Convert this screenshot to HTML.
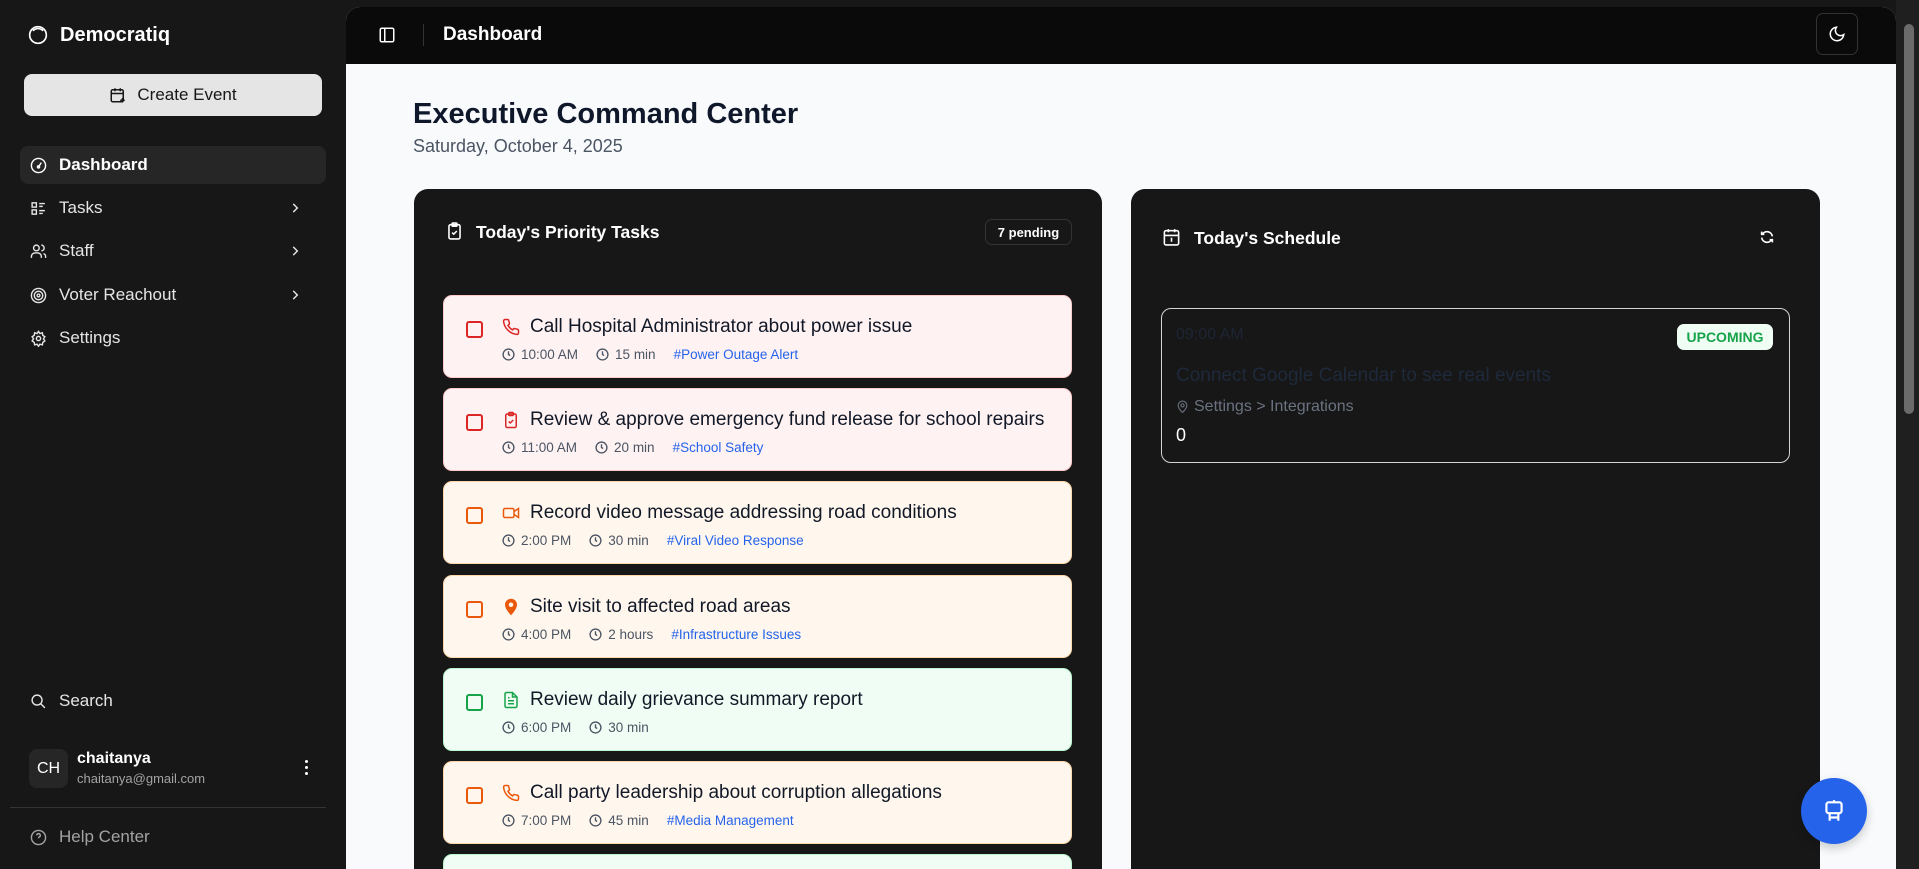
<!DOCTYPE html>
<html><head><meta charset="utf-8"><style>
*{box-sizing:border-box;margin:0;padding:0}
html,body{width:1919px;height:869px;overflow:hidden}
body{background:#171717;font-family:"Liberation Sans",sans-serif;color:#fff}
#wrap{position:relative;width:1919px;height:869px;overflow:hidden}
.abs{position:absolute}
svg{display:block}
.nav{position:absolute;left:20px;width:306px;height:38px;display:flex;align-items:center;padding-left:10px;font-size:17px;color:#e5e5e5}
.nav svg{margin-right:12px}
.nav .chev{position:absolute;right:12px}
.task{position:absolute;left:443px;width:629px;height:83px;border-radius:9px;border:1px solid}
.red{background:#fef2f2;border-color:#fecaca}
.org{background:#fff7ed;border-color:#fed7aa}
.grn{background:#f0fdf4;border-color:#bbf7d0}
.cb{position:absolute;left:22px;top:25px;width:17px;height:17px;border:2px solid;border-radius:3px}
.red .cb{border-color:#dc2626}.org .cb{border-color:#ea580c}.grn .cb{border-color:#16a34a}
.ti{position:absolute;left:58px;top:22px}
.tt{position:absolute;left:86px;top:20px;font-size:19px;color:#111827;white-space:nowrap}
.meta{position:absolute;left:58px;top:51px;font-size:13.5px;color:#4b5563;display:flex;align-items:center;white-space:nowrap}
.meta svg{margin-right:6px}
.meta span{margin-right:18px;display:flex;align-items:center}
.meta .tag{color:#2563eb}
</style></head><body><div id="wrap">
<div class="abs" style="left:28px;top:25px"><svg width="20" height="20" viewBox="0 0 24 24" fill="none" stroke="#fff" stroke-width="2"><circle cx="12" cy="12" r="10"/><path d="M6 7a8 8 0 0 1 12 0"/></svg></div>
<div class="abs" style="left:60px;top:24px;font-size:20px;font-weight:bold">Democratiq</div>
<div class="abs" style="left:24px;top:74px;width:298px;height:42px;background:#e5e5e5;border-radius:8px;display:flex;align-items:center;justify-content:center;color:#171717;font-size:17px"><svg width="18" height="18" viewBox="0 0 24 24" fill="none" stroke="#171717" stroke-width="2" style="margin-right:10px"><rect x="3" y="5" width="16" height="16" rx="2"/><path d="M8 3v4M15 3v4M3 10h16M18 16v6M15 19h6"/></svg>Create Event</div>
<div class="nav" style="top:146px;background:#262626;border-radius:8px;font-weight:bold;color:#fff"><svg width="17" height="17" viewBox="0 0 24 24" fill="none" stroke="#fff" stroke-width="2"><circle cx="12" cy="12" r="10"/><path d="M12 14l4-6"/><circle cx="12" cy="14" r="1.5"/></svg>Dashboard</div>
<div class="nav" style="top:189px"><svg width="17" height="17" viewBox="0 0 24 24" fill="none" stroke="#e5e5e5" stroke-width="2"><rect x="3" y="4" width="6" height="6"/><rect x="3" y="14" width="6" height="6"/><path d="M13 5h8M13 9h5M13 15h8M13 19h5"/></svg>Tasks<svg class="chev" width="14" height="14" viewBox="0 0 24 24" fill="none" stroke="#e5e5e5" stroke-width="2.5"><path d="M9 5l7 7-7 7"/></svg></div>
<div class="nav" style="top:232px"><svg width="17" height="17" viewBox="0 0 24 24" fill="none" stroke="#e5e5e5" stroke-width="2"><circle cx="9" cy="7" r="4"/><path d="M2 21v-2a5 5 0 0 1 5-5h4a5 5 0 0 1 5 5v2M16 3a4 4 0 0 1 0 8M22 21v-2a4 4 0 0 0-3-4"/></svg>Staff<svg class="chev" width="14" height="14" viewBox="0 0 24 24" fill="none" stroke="#e5e5e5" stroke-width="2.5"><path d="M9 5l7 7-7 7"/></svg></div>
<div class="nav" style="top:276px"><svg width="17" height="17" viewBox="0 0 24 24" fill="none" stroke="#e5e5e5" stroke-width="2"><circle cx="12" cy="12" r="10"/><circle cx="12" cy="12" r="6"/><circle cx="12" cy="12" r="2"/></svg>Voter Reachout<svg class="chev" width="14" height="14" viewBox="0 0 24 24" fill="none" stroke="#e5e5e5" stroke-width="2.5"><path d="M9 5l7 7-7 7"/></svg></div>
<div class="nav" style="top:319px"><svg width="17" height="17" viewBox="0 0 24 24" fill="none" stroke="#e5e5e5" stroke-width="2"><circle cx="12" cy="12" r="3"/><path d="M12 2l2 3 3.5-1 .5 3.5 3 2-2 3 2 3-3 2-.5 3.5-3.5-1-2 3-2-3-3.5 1-.5-3.5-3-2 2-3-2-3 3-2 .5-3.5 3.5 1z"/></svg>Settings</div>
<div class="nav" style="top:682px"><svg width="17" height="17" viewBox="0 0 24 24" fill="none" stroke="#e5e5e5" stroke-width="2"><circle cx="10" cy="10" r="7"/><path d="M15 15l6 6"/></svg>Search</div>
<div class="abs" style="left:29px;top:749px;width:39px;height:39px;background:#262626;border-radius:8px;display:flex;align-items:center;justify-content:center;font-size:16px">CH</div>
<div class="abs" style="left:77px;top:750px;font-size:16px;font-weight:bold">chaitanya</div>
<div class="abs" style="left:77px;top:771px;font-size:13px;color:#a3a3a3">chaitanya@gmail.com</div>
<div class="abs" style="left:305px;top:760px;width:3px;height:3px;background:#fff;border-radius:50%;box-shadow:0 6px 0 #fff,0 12px 0 #fff"></div>
<div class="abs" style="left:10px;top:807px;width:316px;height:1px;background:#333"></div>
<div class="nav" style="top:818px;color:#a3a3a3"><svg width="17" height="17" viewBox="0 0 24 24" fill="none" stroke="#a3a3a3" stroke-width="2"><circle cx="12" cy="12" r="10"/><path d="M9.5 9a2.5 2.5 0 1 1 3.5 2.3c-.7.4-1 1-1 1.7M12 17h.01"/></svg>Help Center</div>

<div class="abs" style="left:346px;top:7px;width:1550px;height:862px;background:#f8fafc;border-radius:14px 14px 0 0;overflow:hidden">
 <div class="abs" style="left:0;top:0;width:1550px;height:57px;background:#0a0a0a"></div>
</div>
<div class="abs" style="left:378px;top:26px"><svg width="18" height="18" viewBox="0 0 24 24" fill="none" stroke="#fff" stroke-width="2"><rect x="3" y="3" width="18" height="18" rx="2"/><path d="M9 3v18"/></svg></div>
<div class="abs" style="left:423px;top:24px;width:1px;height:22px;background:#333"></div>
<div class="abs" style="left:443px;top:24px;font-size:19px;font-weight:bold">Dashboard</div>
<div class="abs" style="left:1816px;top:13px;width:42px;height:42px;border:1px solid #333;border-radius:7px;display:flex;align-items:center;justify-content:center"><svg width="18" height="18" viewBox="0 0 24 24" fill="none" stroke="#fff" stroke-width="2"><path d="M21 12.8A9 9 0 1 1 11.2 3a7 7 0 0 0 9.8 9.8z"/></svg></div>

<div class="abs" style="left:413px;top:98px;font-size:29px;font-weight:bold;color:#0f172a">Executive Command Center</div>
<div class="abs" style="left:413px;top:136px;font-size:18px;color:#4b5563">Saturday, October 4, 2025</div>

<div class="abs" style="left:414px;top:189px;width:688px;height:680px;background:#171717;border-radius:14px 14px 0 0"></div>
<div class="abs" style="left:445px;top:221px"><svg width="19" height="20" viewBox="0 0 24 24" fill="none" stroke="#fff" stroke-width="2"><rect x="5" y="4" width="14" height="18" rx="2"/><rect x="9" y="2" width="6" height="4" rx="1"/><path d="M9 14l2 2 4-4"/></svg></div>
<div class="abs" style="left:476px;top:222px;font-size:17.5px;font-weight:bold">Today's Priority Tasks</div>
<div class="abs" style="left:985px;top:219px;width:87px;height:26px;border:1px solid #333;border-radius:7px;font-size:13px;font-weight:bold;display:flex;align-items:center;justify-content:center">7 pending</div>

<div class="task red" style="top:295px"><div class="cb"></div><svg class="ti" width="18" height="18" viewBox="0 0 24 24" fill="none" stroke="#dc2626" stroke-width="2"><path d="M22 16.9v3a2 2 0 0 1-2.2 2A19.8 19.8 0 0 1 2.1 4.2 2 2 0 0 1 4.1 2h3a2 2 0 0 1 2 1.7c.1 1 .4 1.9.7 2.8a2 2 0 0 1-.5 2.1L8 9.9a16 16 0 0 0 6 6l1.3-1.3a2 2 0 0 1 2.1-.4c.9.3 1.8.6 2.8.7a2 2 0 0 1 1.7 2z"/></svg><div class="tt">Call Hospital Administrator about power issue</div><div class="meta"><span><svg width="13" height="13" viewBox="0 0 24 24" fill="none" stroke="#4b5563" stroke-width="2.5"><circle cx="12" cy="12" r="10"/><path d="M12 6v6l3 2"/></svg>10:00 AM</span><span><svg width="13" height="13" viewBox="0 0 24 24" fill="none" stroke="#4b5563" stroke-width="2.5"><circle cx="12" cy="12" r="10"/><path d="M12 6v6l3 2"/></svg>15 min</span><span class="tag">#Power Outage Alert</span></div></div>

<div class="task red" style="top:388px"><div class="cb"></div><svg class="ti" width="18" height="18" viewBox="0 0 24 24" fill="none" stroke="#dc2626" stroke-width="2"><rect x="5" y="4" width="14" height="18" rx="2"/><rect x="9" y="2" width="6" height="4" rx="1"/><path d="M9 14l2 2 4-4"/></svg><div class="tt">Review &amp; approve emergency fund release for school repairs</div><div class="meta"><span><svg width="13" height="13" viewBox="0 0 24 24" fill="none" stroke="#4b5563" stroke-width="2.5"><circle cx="12" cy="12" r="10"/><path d="M12 6v6l3 2"/></svg>11:00 AM</span><span><svg width="13" height="13" viewBox="0 0 24 24" fill="none" stroke="#4b5563" stroke-width="2.5"><circle cx="12" cy="12" r="10"/><path d="M12 6v6l3 2"/></svg>20 min</span><span class="tag">#School Safety</span></div></div>

<div class="task org" style="top:481px"><div class="cb"></div><svg class="ti" width="18" height="18" viewBox="0 0 24 24" fill="none" stroke="#ea580c" stroke-width="2"><rect x="2" y="6" width="14" height="12" rx="2"/><path d="M16 10l6-4v12l-6-4"/></svg><div class="tt">Record video message addressing road conditions</div><div class="meta"><span><svg width="13" height="13" viewBox="0 0 24 24" fill="none" stroke="#4b5563" stroke-width="2.5"><circle cx="12" cy="12" r="10"/><path d="M12 6v6l3 2"/></svg>2:00 PM</span><span><svg width="13" height="13" viewBox="0 0 24 24" fill="none" stroke="#4b5563" stroke-width="2.5"><circle cx="12" cy="12" r="10"/><path d="M12 6v6l3 2"/></svg>30 min</span><span class="tag">#Viral Video Response</span></div></div>

<div class="task org" style="top:575px"><div class="cb"></div><svg class="ti" width="18" height="18" viewBox="0 0 24 24"><path d="M12 1a8 8 0 0 0-8 8c0 6 8 14 8 14s8-8 8-14a8 8 0 0 0-8-8z" fill="#ea580c"/><circle cx="12" cy="9" r="3" fill="#fff7ed"/></svg><div class="tt">Site visit to affected road areas</div><div class="meta"><span><svg width="13" height="13" viewBox="0 0 24 24" fill="none" stroke="#4b5563" stroke-width="2.5"><circle cx="12" cy="12" r="10"/><path d="M12 6v6l3 2"/></svg>4:00 PM</span><span><svg width="13" height="13" viewBox="0 0 24 24" fill="none" stroke="#4b5563" stroke-width="2.5"><circle cx="12" cy="12" r="10"/><path d="M12 6v6l3 2"/></svg>2 hours</span><span class="tag">#Infrastructure Issues</span></div></div>

<div class="task grn" style="top:668px"><div class="cb"></div><svg class="ti" width="18" height="18" viewBox="0 0 24 24" fill="none" stroke="#16a34a" stroke-width="2"><path d="M14 2H6a2 2 0 0 0-2 2v16a2 2 0 0 0 2 2h12a2 2 0 0 0 2-2V8z"/><path d="M14 2v6h6M8 13h8M8 17h8M8 9h2"/></svg><div class="tt">Review daily grievance summary report</div><div class="meta"><span><svg width="13" height="13" viewBox="0 0 24 24" fill="none" stroke="#4b5563" stroke-width="2.5"><circle cx="12" cy="12" r="10"/><path d="M12 6v6l3 2"/></svg>6:00 PM</span><span><svg width="13" height="13" viewBox="0 0 24 24" fill="none" stroke="#4b5563" stroke-width="2.5"><circle cx="12" cy="12" r="10"/><path d="M12 6v6l3 2"/></svg>30 min</span></div></div>

<div class="task org" style="top:761px"><div class="cb"></div><svg class="ti" width="18" height="18" viewBox="0 0 24 24" fill="none" stroke="#ea580c" stroke-width="2"><path d="M22 16.9v3a2 2 0 0 1-2.2 2A19.8 19.8 0 0 1 2.1 4.2 2 2 0 0 1 4.1 2h3a2 2 0 0 1 2 1.7c.1 1 .4 1.9.7 2.8a2 2 0 0 1-.5 2.1L8 9.9a16 16 0 0 0 6 6l1.3-1.3a2 2 0 0 1 2.1-.4c.9.3 1.8.6 2.8.7a2 2 0 0 1 1.7 2z"/></svg><div class="tt">Call party leadership about corruption allegations</div><div class="meta"><span><svg width="13" height="13" viewBox="0 0 24 24" fill="none" stroke="#4b5563" stroke-width="2.5"><circle cx="12" cy="12" r="10"/><path d="M12 6v6l3 2"/></svg>7:00 PM</span><span><svg width="13" height="13" viewBox="0 0 24 24" fill="none" stroke="#4b5563" stroke-width="2.5"><circle cx="12" cy="12" r="10"/><path d="M12 6v6l3 2"/></svg>45 min</span><span class="tag">#Media Management</span></div></div>

<div class="task grn" style="top:854px;height:15px;border-bottom:none;border-radius:9px 9px 0 0"></div>

<div class="abs" style="left:1131px;top:189px;width:689px;height:680px;background:#171717;border-radius:14px 14px 0 0"></div>
<div class="abs" style="left:1162px;top:227px"><svg width="19" height="20" viewBox="0 0 24 24" fill="none" stroke="#fff" stroke-width="2"><rect x="3" y="4" width="18" height="18" rx="2"/><path d="M8 2v4M16 2v4M3 10h18M11 14h1v4"/></svg></div>
<div class="abs" style="left:1194px;top:228px;font-size:17.5px;font-weight:bold">Today's Schedule</div>
<div class="abs" style="left:1759px;top:229px"><svg width="16" height="16" viewBox="0 0 24 24" fill="none" stroke="#fff" stroke-width="2.5"><path d="M20 11a8 8 0 0 0-14.8-3M4 4v4h4M4 13a8 8 0 0 0 14.8 3M20 20v-4h-4"/></svg></div>
<div class="abs" style="left:1161px;top:308px;width:629px;height:155px;border:1.5px solid #d4d4d4;border-radius:10px"></div>
<div class="abs" style="left:1176px;top:326px;font-size:16px;color:#1e2433">09:00 AM</div>
<div class="abs" style="left:1677px;top:324px;width:96px;height:26px;background:#f0fdf4;border-radius:7px;color:#16a34a;font-size:14px;font-weight:bold;display:flex;align-items:center;justify-content:center">UPCOMING</div>
<div class="abs" style="left:1176px;top:365px;font-size:19px;color:#1e293b">Connect Google Calendar to see real events</div>
<div class="abs" style="left:1176px;top:398px;font-size:16px;color:#6b7280;display:flex;align-items:center"><svg width="13" height="14" viewBox="0 0 24 24" fill="none" stroke="#6b7280" stroke-width="2" style="margin-right:5px"><path d="M12 22s8-7 8-13a8 8 0 0 0-16 0c0 6 8 13 8 13z"/><circle cx="12" cy="9" r="3"/></svg>Settings &gt; Integrations</div>
<div class="abs" style="left:1176px;top:425px;font-size:18px;color:#fff">0</div>

<div class="abs" style="left:1801px;top:778px;width:66px;height:66px;border-radius:50%;background:#2563eb;display:flex;align-items:center;justify-content:center;box-shadow:0 4px 10px rgba(0,0,0,.2)"><svg width="26" height="26" viewBox="0 0 24 24" fill="none" stroke="#fff" stroke-width="2"><rect x="5" y="4" width="14" height="10" rx="2"/><path d="M12 2v2M9 9h.01M15 9h.01M8 14v7M16 14v7M8 18h8"/></svg></div>

<div class="abs" style="left:1896px;top:0;width:23px;height:869px;background:#1f1f1f"></div>
<div class="abs" style="left:1904px;top:24px;width:10px;height:390px;background:#6b6b6b;border-radius:5px"></div>
</div></body></html>
